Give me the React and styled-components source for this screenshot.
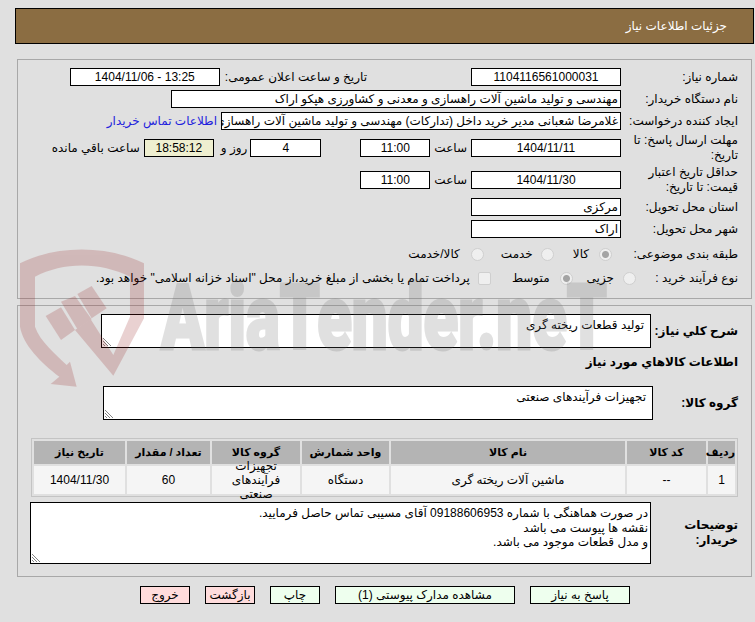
import React from "react";
import styled, { createGlobalStyle } from "styled-components";

const GlobalStyle = createGlobalStyle`
  html, body {
    margin: 0;
    padding: 0;
    background: #e0e0e0;
  }
  body {
    font-family: "Liberation Sans", "DejaVu Sans", sans-serif;
    font-size: 12px;
    color: #000;
  }
`;

const Page = styled.div`
  position: relative;
  width: 755px;
  height: 622px;
  overflow: hidden;
  direction: rtl;
  padding: 8px 1px 0 15px;
  box-sizing: border-box;
`;

const Watermark = styled.svg`
  position: absolute;
  left: 0;
  top: 0;
  width: 755px;
  height: 622px;
  pointer-events: none;
`;

const Header = styled.div`
  height: 36px;
  background: #8b6d42;
  border: 1px solid #000;
  box-sizing: border-box;
  color: #fff;
  line-height: 34px;
  padding-right: 26px;
`;

const Panel = styled.div`
  margin: ${(p) => p.$top}px 2px 0 2px;
  height: ${(p) => p.$height}px;
  border: 1px solid #a8a8a8;
  box-sizing: border-box;
`;

const Form = styled.div`
  display: flex;
  flex-direction: column;
  padding: ${(p) => p.$top}px 13px 0 0;
`;

const Row = styled.div`
  display: flex;
  align-items: center;
  height: ${(p) => p.$height || 22}px;
`;

const Label = styled.div`
  width: ${(p) => p.$width || 112}px;
  flex: none;
  line-height: 15px;
  font-weight: ${(p) => (p.$bold ? 700 : 400)};
  margin-left: ${(p) => p.$gap ?? 5}px;
`;

const Value = styled.div`
  width: ${(p) => p.$width}px;
  height: 18px;
  flex: none;
  background: ${(p) => p.$bg || "#fff"};
  border: 1px solid #000;
  box-sizing: border-box;
  line-height: 16px;
  padding: 0 2px;
  margin-left: ${(p) => p.$gap || 0}px;
  text-align: ${(p) => (p.$center ? "center" : "right")};
  white-space: nowrap;
  overflow: hidden;
`;

const Text = styled.span`
  flex: none;
  margin-left: ${(p) => p.$gap || 0}px;
  margin-right: ${(p) => p.$before || 0}px;
  white-space: nowrap;
`;

const ContactLink = styled.a`
  color: #2222dd;
  flex: none;
  white-space: nowrap;
  margin-right: 4px;
`;

const Radio = styled.span`
  flex: none;
  width: 13px;
  height: 13px;
  box-sizing: border-box;
  margin-left: ${(p) => p.$gap || 0}px;
  border-radius: 50%;
  border: 1px solid #cfcfcf;
  background: ${(p) => (p.$checked ? "radial-gradient(circle, #a4a4a4 0 3px, #efefef 4px)" : "#efefef")};
`;

const Check = styled.span`
  flex: none;
  width: 13px;
  height: 13px;
  box-sizing: border-box;
  margin-left: ${(p) => p.$gap || 0}px;
  border-radius: 2px;
  border: 1px solid #cfcfcf;
  background: #efefef;
`;

const Area = styled.div`
  position: relative;
  flex: none;
  width: ${(p) => p.$width}px;
  height: ${(p) => p.$height}px;
  background: #fff;
  border: 1px solid #000;
  box-sizing: border-box;
  padding: 3px ${(p) => p.$side || 5}px;
  line-height: 14.5px;
  white-space: pre-line;
`;

const Grip = styled.svg`
  position: absolute;
  left: 1px;
  bottom: 1px;
  width: 9px;
  height: 9px;
`;

const Table = styled.div`
  display: grid;
  grid-template-columns: 27px 79px 234px 87px 88px 83px 91px;
  gap: 2px;
  width: 707px;
  margin: 8px 13px 0 0;
  padding: 2px;
  box-sizing: border-box;
  border: 1px solid #c4c4c4;
`;

const HeadCell = styled.div`
  height: 23px;
  background: #b4b4b4;
  font-weight: 700;
  font-size: 11px;
  line-height: 23px;
  text-align: center;
  white-space: nowrap;
`;

const Cell = styled.div`
  height: 28px;
  background: #f5f5f5;
  line-height: 14px;
  display: flex;
  align-items: center;
  justify-content: center;
  text-align: center;
`;

const Actions = styled.div`
  display: flex;
  gap: 15px;
  margin: 9px 124px 0 0;
`;

const ActionButton = styled.button`
  width: ${(p) => p.$width || 50}px;
  height: 18px;
  padding: 0;
  border: 1px solid #000;
  background: ${(p) => (p.$danger ? "#ffdcdc" : "#eeffee")};
  color: #000;
  font-family: inherit;
  font-size: 12px;
  line-height: 16px;
`;

const Grippy = () => (
  <Grip viewBox="0 0 9 9">
    <path d="M0 1L8 9M0 4L5 9M0 7L2 9" stroke="#666" strokeWidth="0.8" fill="none" />
  </Grip>
);

const columns = ["ردیف", "کد کالا", "نام کالا", "واحد شمارش", "گروه کالا", "تعداد / مقدار", "تاریخ نیاز"];

export default function App() {
  return (
    <Page>
      <GlobalStyle />
      <Header>جزئیات اطلاعات نیاز</Header>
      <Panel $top={15} $height={240}>
        <Form $top={6}>
          <Row>
            <Label>شماره نیاز:</Label>
            <Value $width={150} $center $gap={104}>1104116561000031</Value>
            <Text $gap={5}>تاریخ و ساعت اعلان عمومی:</Text>
            <Value $width={150} $center>13:25 - 1404/11/06</Value>
          </Row>
          <Row>
            <Label>نام دستگاه خریدار:</Label>
            <Value $width={450}>مهندسی و تولید ماشین آلات راهسازی و معدنی و کشاورزی هپکو اراک</Value>
          </Row>
          <Row>
            <Label>ایجاد کننده درخواست:</Label>
            <Value $width={400}>غلامرضا شعبانی مدیر خرید داخل (تدارکات) مهندسی و تولید ماشین آلات راهسازی و معدنی</Value>
            <ContactLink>اطلاعات تماس خریدار</ContactLink>
          </Row>
          <Row $height={32}>
            <Label>مهلت ارسال پاسخ: تا تاریخ:</Label>
            <Value $width={150} $center $gap={4}>1404/11/11</Value>
            <Text $gap={4}>ساعت</Text>
            <Value $width={70} $center $gap={39}>11:00</Value>
            <Value $width={71} $center $gap={3}>4</Value>
            <Text $gap={7}>روز و</Text>
            <Value $width={70} $center $bg="#efefd0" $gap={4}>18:58:12</Value>
            <Text>ساعت باقي مانده</Text>
          </Row>
          <Row $height={32}>
            <Label>حداقل تاریخ اعتبار قیمت: تا تاریخ:</Label>
            <Value $width={150} $center $gap={4}>1404/11/30</Value>
            <Text $gap={4}>ساعت</Text>
            <Value $width={70} $center>11:00</Value>
          </Row>
          <Row>
            <Label>استان محل تحویل:</Label>
            <Value $width={150}>مرکزی</Value>
          </Row>
          <Row>
            <Label>شهر محل تحویل:</Label>
            <Value $width={150}>اراک</Value>
          </Row>
          <Row $height={28}>
            <Label $gap={14}>طبقه بندی موضوعی:</Label>
            <Radio $checked $gap={10} />
            <Text $gap={19}>کالا</Text>
            <Radio $gap={8} />
            <Text $gap={17}>خدمت</Text>
            <Radio $gap={11} />
            <Text>کالا/خدمت</Text>
          </Row>
          <Row $height={20}>
            <Label $width={96} $gap={6}>نوع فرآیند خرید :</Label>
            <Radio $gap={9} />
            <Text $gap={14}>جزیی</Text>
            <Radio $checked $gap={10} />
            <Text $gap={21}>متوسط</Text>
            <Check $gap={8} />
            <Text>پرداخت تمام یا بخشی از مبلغ خرید،از محل "اسناد خزانه اسلامی" خواهد بود.</Text>
          </Row>
        </Form>
      </Panel>
      <Panel $top={6} $height={272}>
        <Form $top={8}>
          <Row $height={34}>
            <Label $bold $width={87} $gap={0}>شرح کلي نیاز:</Label>
            <Area $width={550} $height={34} $side={6}>تولید قطعات ریخته گری<Grippy /></Area>
          </Row>
          <Row $height={28}>
            <Label $bold $width={200}>اطلاعات کالاهاي مورد نیاز</Label>
          </Row>
          <Row $height={54}>
            <Label $bold $width={85} $gap={0}>گروه کالا:</Label>
            <Area $width={550} $height={34} $side={6}>تجهیزات فرآیندهای صنعتی<Grippy /></Area>
          </Row>
        </Form>
        <Table>
          {columns.map((c) => <HeadCell key={c}>{c}</HeadCell>)}
          <Cell>1</Cell>
          <Cell>--</Cell>
          <Cell>ماشین آلات ریخته گری</Cell>
          <Cell>دستگاه</Cell>
          <Cell>تجهیزات فرآیندهای<br />صنعتی</Cell>
          <Cell>60</Cell>
          <Cell>1404/11/30</Cell>
        </Table>
        <Form $top={5}>
          <Row $height={62}>
            <Label $bold $width={87} $gap={0}>توضیحات خریدار:</Label>
            <Area $width={621} $height={62} $side={2}>{"در صورت هماهنگی با شماره 09188606953 آقای مسیبی تماس حاصل فرمایید.\nنقشه ها پیوست می باشد\nو مدل قطعات موجود می باشد."}<Grippy /></Area>
          </Row>
        </Form>
      </Panel>
      <Actions>
        <ActionButton $width={100}>پاسخ به نیاز</ActionButton>
        <ActionButton $width={180}>مشاهده مدارک پیوستی (1)</ActionButton>
        <ActionButton>چاپ</ActionButton>
        <ActionButton $danger>بازگشت</ActionButton>
        <ActionButton $danger>خروج</ActionButton>
      </Actions>
      <Watermark viewBox="0 0 755 622">
        <g transform="translate(0 230) scale(0.3333)" fill="#961e1e" opacity="0.2">
          <path d="M60 100C170 45 320 45 432 100V265L340 437L225 300L272 268L340 375L390 260V140C300 95 190 95 105 140V290C120 335 170 375 200 405L210 395L230 470L152 462L178 440C120 395 70 345 60 290Z" />
          <path d="M137 258L183 232L225 300L183 330Z" />
          <path d="M183 215L225 198L275 268L232 297Z" />
          <path d="M232 192L275 168L320 235L275 265Z" />
        </g>
        <g opacity="0.2" fill="#696969" stroke="#696969" strokeWidth="3">
          <text x="161" y="349" fontFamily="Roboto, sans-serif" fontWeight="900" fontSize="90" textLength="446" lengthAdjust="spacingAndGlyphs" direction="ltr">
            AriaTender.neT
          </text>
        </g>
      </Watermark>
    </Page>
  );
}
